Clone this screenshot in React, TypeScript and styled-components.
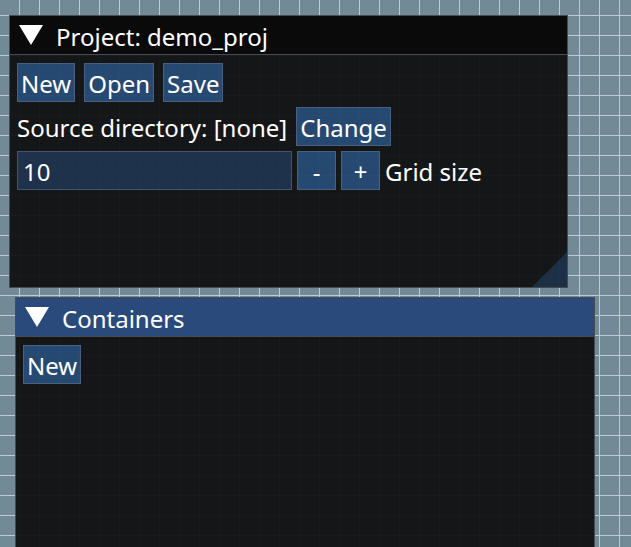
import styled, { createGlobalStyle } from "styled-components";

const GlobalStyle = createGlobalStyle`
  html, body {
    margin: 0;
    padding: 0;
  }
  body {
    font-family: "Noto Sans", "Open Sans", sans-serif;
    color: #ffffff;
  }
`;

const Desktop = styled.div`
  position: relative;
  width: 631px;
  height: 547px;
  overflow: hidden;
  background-color: #728996;
  background-image: linear-gradient(to right, #b8ccd8 1px, transparent 1px),
    linear-gradient(to bottom, #b8ccd8 1px, transparent 1px);
  background-size: 20px 20px;
  background-position: 19px 15px;
`;

const Window = styled.div<{ $left: number; $top: number; $width: number; $height: number }>`
  position: absolute;
  left: ${(p) => p.$left}px;
  top: ${(p) => p.$top}px;
  width: ${(p) => p.$width}px;
  height: ${(p) => p.$height}px;
  box-sizing: border-box;
  border: 1px solid #474a52;
  background: rgba(15, 15, 15, 0.94);
  display: flex;
  flex-direction: column;
  overflow: hidden;
`;

const TitleBar = styled.div<{ $active?: boolean }>`
  height: 38px;
  flex-shrink: 0;
  display: flex;
  align-items: center;
  gap: 12px;
  padding-left: 9px;
  background: ${(p) => (p.$active ? "#294a7a" : "#0a0a0a")};
  border-bottom: 1px solid #474a52;
  font-size: 24px;
  line-height: 30px;
`;

const TitleText = styled.span`
  padding-top: 3px;
`;

const Arrow = styled.svg`
  width: 24px;
  height: 20px;
  flex-shrink: 0;
  margin-right: 1px;
`;

const Content = styled.div`
  padding: 8px 7px;
  display: flex;
  flex-direction: column;
  gap: 5px;
  font-size: 24px;
`;

const Row = styled.div<{ $gap?: number }>`
  display: flex;
  align-items: center;
  gap: ${(p) => p.$gap ?? 9}px;
`;

const Button = styled.button<{ $square?: boolean }>`
  box-sizing: border-box;
  height: 39px;
  ${(p) => (p.$square ? "width: 39px;" : "")}
  padding: 3px 3px 1px;
  margin: 0;
  border: 1px solid rgba(110, 120, 145, 0.5);
  background: rgba(66, 150, 250, 0.4);
  color: #ffffff;
  font-family: "Noto Sans", "Open Sans", sans-serif;
  font-size: 24px;
  line-height: 33px;
`;

const Label = styled.span`
  padding-top: 2px;
  line-height: 37px;
  white-space: nowrap;
`;

const NumberInput = styled.div`
  box-sizing: border-box;
  width: 275px;
  height: 39px;
  padding: 2px 5px 0;
  border: 1px solid rgba(110, 120, 145, 0.5);
  background: rgba(41, 74, 122, 0.54);
  line-height: 35px;
`;

const ResizeGrip = styled.div`
  position: absolute;
  right: 0;
  bottom: 0;
  width: 35px;
  height: 35px;
  background: rgba(66, 150, 250, 0.2);
  clip-path: polygon(100% 0, 100% 100%, 0 100%);
`;

function TitleArrow() {
  return (
    <Arrow viewBox="0 0 24 20">
      <polygon points="0,0 24,0 12,20" fill="#ffffff" />
    </Arrow>
  );
}

export default function App() {
  return (
    <>
      <GlobalStyle />
      <Desktop>
        <Window $left={9} $top={15} $width={559} $height={273}>
          <TitleBar>
            <TitleArrow />
            <TitleText>Project: demo_proj</TitleText>
          </TitleBar>
          <Content>
            <Row>
              <Button>New</Button>
              <Button>Open</Button>
              <Button>Save</Button>
            </Row>
            <Row>
              <Label>Source directory: [none]</Label>
              <Button>Change</Button>
            </Row>
            <Row $gap={5}>
              <NumberInput>10</NumberInput>
              <Button $square>-</Button>
              <Button $square>+</Button>
              <Label>Grid size</Label>
            </Row>
          </Content>
          <ResizeGrip />
        </Window>

        <Window $left={15} $top={297} $width={580} $height={300}>
          <TitleBar $active>
            <TitleArrow />
            <TitleText>Containers</TitleText>
          </TitleBar>
          <Content>
            <Row>
              <Button>New</Button>
            </Row>
          </Content>
        </Window>
      </Desktop>
    </>
  );
}
